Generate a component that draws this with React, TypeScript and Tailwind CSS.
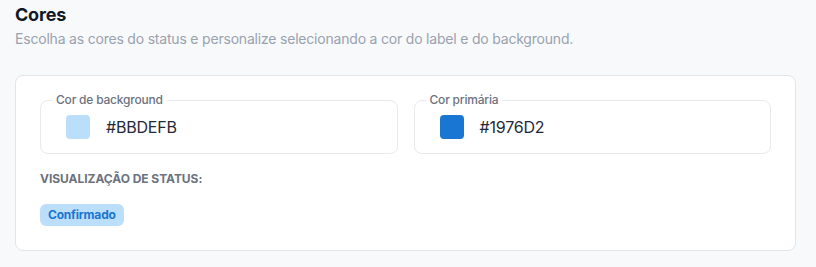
import React from "react";

function ColorField({ label, color }: { label: string; color: string }) {
  return (
    <div className="relative h-[54px] rounded-lg border border-[#e7e9ed] flex items-center pl-[25px] gap-4">
      <span className="absolute left-[11px] top-[-9px] bg-white px-1 text-[12px] leading-4 font-medium text-[#6b7280]">
        {label}
      </span>
      <span className="w-6 h-6 rounded-[4px]" style={{ backgroundColor: color }} />
      <span className="text-[16px] leading-6 text-[#1f2937]">{color}</span>
    </div>
  );
}

export default function App() {
  return (
    <div
      className="min-h-[267px] bg-[#f8f9fb] pl-[15px] pr-[20px] pt-[1px] tracking-[-0.2px]"
      style={{ fontFamily: "Inter, 'Noto Sans', sans-serif" }}
    >
      <h2 className="text-[18px] leading-7 font-bold text-[#111827]">Cores</h2>
      <p className="text-[14px] leading-5 text-[#9aa2ae]">
        Escolha as cores do status e personalize selecionando a cor do label e do background.
      </p>
      <div className="mt-[26px] rounded-lg border border-[#e2e5ea] bg-white p-6">
        <div className="grid grid-cols-2 gap-4">
          <ColorField label="Cor de background" color="#BBDEFB" />
          <ColorField label="Cor primária" color="#1976D2" />
        </div>
        <div className="mt-[17px] text-[12px] leading-4 font-bold uppercase tracking-[-0.05px] text-[#6b7280]">
          Visualização de status:
        </div>
        <div className="mt-[17px] flex">
          <span className="h-[22px] rounded-md bg-[#BBDEFB] px-2 flex items-center text-[12px] font-bold text-[#1976D2]">
            Confirmado
          </span>
        </div>
      </div>
    </div>
  );
}
